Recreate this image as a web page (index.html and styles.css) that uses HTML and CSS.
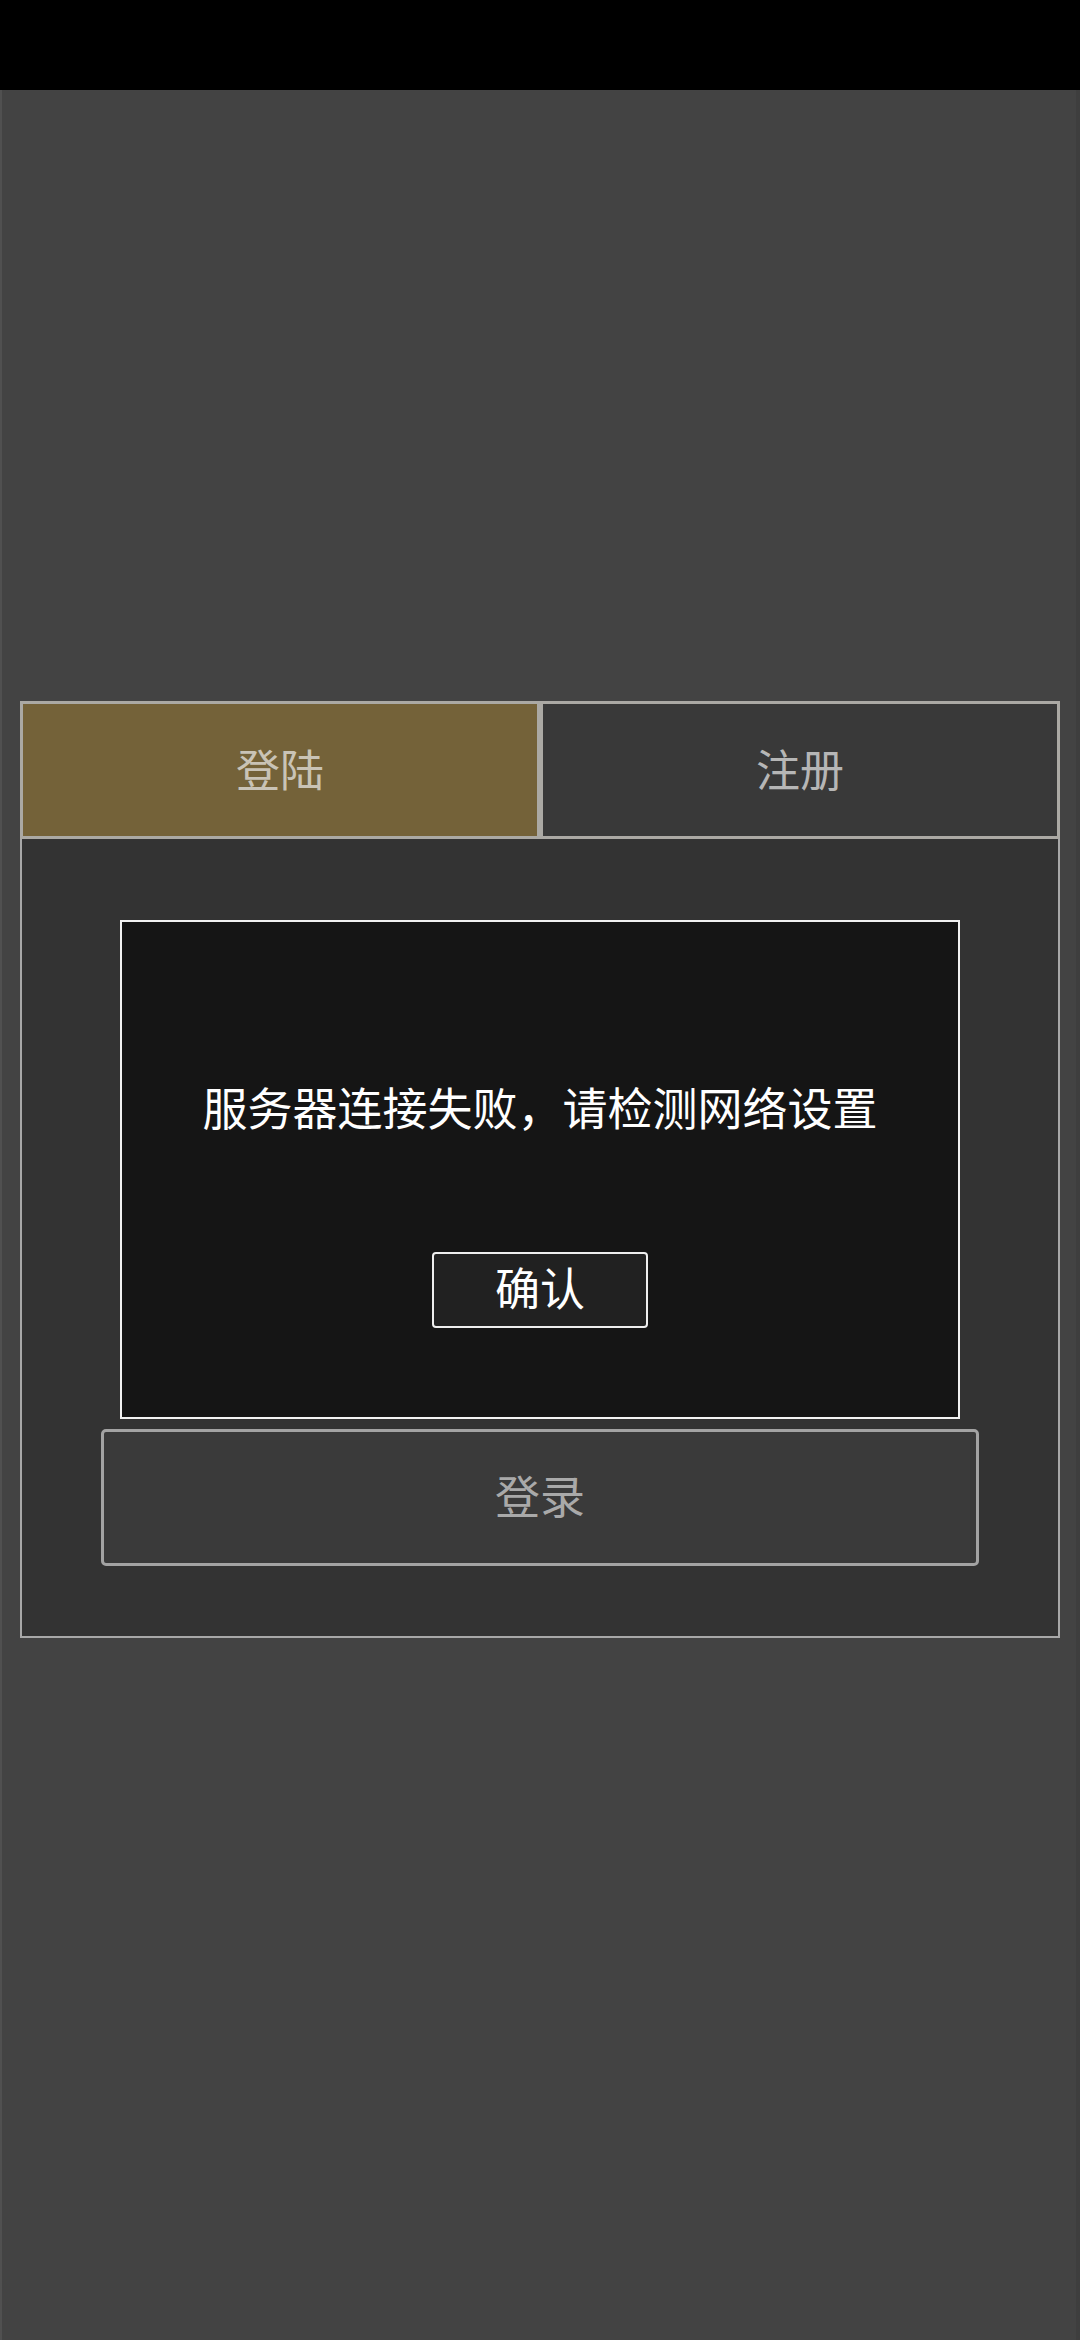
FILE: index.html
```html
<!DOCTYPE html>
<html lang="zh-CN">
<head>
<meta charset="utf-8">
<meta name="viewport" content="width=1080">
<title>登陆</title>
<link rel="stylesheet" href="styles.css">
</head>
<body>
<div class="screen">
  <div class="status-bar"></div>
  <main class="main">
    <section class="card">
      <div class="tabs">
        <div class="tab tab-active">登陆</div>
        <div class="tab">注册</div>
      </div>
      <div class="card-body">
        <div class="dialog">
          <p class="dialog-msg">服务器连接失败，请检测网络设置</p>
          <button class="dialog-btn">确认</button>
        </div>
        <button class="login-btn">登录</button>
      </div>
    </section>
  </main>
</div>
</body>
</html>
```

FILE: styles.css
```css
* { box-sizing: border-box; }
html, body {
  margin: 0;
  padding: 0;
  background: #434343;
}
body {
  width: 1080px;
  height: 2340px;
  font-family: "Noto Sans CJK SC", "Noto Sans", sans-serif;
}
.screen {
  width: 1080px;
  height: 2340px;
  display: flex;
  flex-direction: column;
}
.status-bar {
  height: 90px;
  background: #000000;
  flex: none;
}
.main {
  flex: 1;
  background: #434343;
  border-left: 2px solid #505050;
  border-right: 4px solid #3e3e3e;
  padding: 611px 14px 0 18px;
}
.card {
  width: 1040px;
}
.tabs {
  display: flex;
  height: 138px;
}
.tab {
  width: 520px;
  height: 138px;
  border: 3px solid #aba9a4;
  background: #393939;
  color: #b6b6b6;
  font-size: 44px;
  display: flex;
  align-items: center;
  justify-content: center;
  padding-bottom: 5px;
}
.tab-active {
  background: #746239;
  color: #c9c3b6;
}
.card-body {
  height: 799px;
  background: #333333;
  border: 2px solid #a8a8a8;
  border-top: none;
  padding-top: 81px;
  display: flex;
  flex-direction: column;
  align-items: center;
}
.dialog {
  width: 840px;
  height: 499px;
  background: #151515;
  border: 2px solid #f2f2f2;
  display: flex;
  flex-direction: column;
  align-items: center;
  padding-top: 155px;
}
.dialog-msg {
  margin: 0;
  color: #ffffff;
  font-size: 45px;
  line-height: 60px;
  white-space: nowrap;
}
.dialog-btn {
  margin-top: 115px;
  width: 216px;
  height: 76px;
  background: #212121;
  border: 2px solid #eeeeee;
  border-radius: 4px;
  color: #ffffff;
  font-family: "Noto Sans CJK SC", "Noto Sans", sans-serif;
  font-size: 45px;
  line-height: 64px;
  padding: 0 0 6px 0;
}
.login-btn {
  margin-top: 10px;
  width: 878px;
  height: 137px;
  background: #3a3a3a;
  border: 3px solid #a3a3a3;
  border-radius: 5px;
  color: #a9a9a9;
  font-family: "Noto Sans CJK SC", "Noto Sans", sans-serif;
  font-size: 45px;
  padding: 0 0 6px 0;
}
```
